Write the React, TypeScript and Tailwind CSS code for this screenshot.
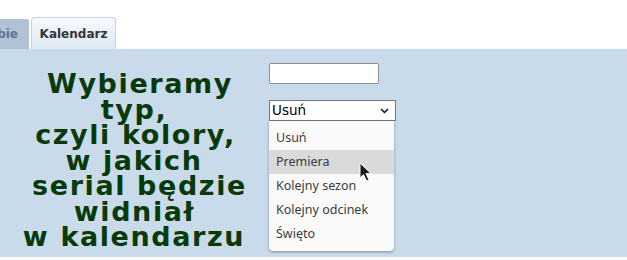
import React from "react";

const lines = [
  { text: "Wybieramy", shift: "pl-[12px]" },
  { text: "typ,", shift: "" },
  { text: "czyli kolory,", shift: "pl-[3px]" },
  { text: "w jakich", shift: "" },
  { text: "serial będzie", shift: "pl-[11px]" },
  { text: "widniał", shift: "pl-[1px]" },
  { text: "w kalendarzu", shift: "" },
];

const options = ["Usuń", "Premiera", "Kolejny sezon", "Kolejny odcinek", "Święto"];

function Cursor() {
  return (
    <svg
      width="14"
      height="21"
      viewBox="0 0 14 21"
      className="absolute left-[359px] top-[162px]"
    >
      <path
        d="M1 1 L1 16 L4.5 12.5 L7.5 19 L10 18 L7 11.5 L12 11.5 Z"
        fill="#1a1a1a"
        stroke="#ffffff"
        strokeWidth="1"
        strokeLinejoin="round"
      />
    </svg>
  );
}

export default function App() {
  return (
    <div className="relative h-[260px] w-[627px] overflow-hidden bg-white font-['DejaVu_Sans',sans-serif]">
      {/* tabs */}
      <div className="flex h-[49px] items-end">
        <div className="flex h-[30px] w-[30px] items-center justify-end overflow-hidden whitespace-nowrap rounded-tr-[3px] border-r border-white bg-[#b2c2d6] pr-[11px] text-[12px] font-bold text-[#5d7393]">
          bie
        </div>
        <div className="ml-[1px] flex h-[32px] w-[85px] items-center justify-center rounded-t-[4px] border border-b-0 border-[#c2d3e4] bg-gradient-to-b from-[#f7fafd] to-[#dce8f3] text-[12px] font-bold text-[#333]">
          Kalendarz
        </div>
      </div>

      {/* content */}
      <div className="flex h-[208px] bg-[#c9dbeb]">
        <div className="w-[268px] pt-[22px]">
          <h1 className="text-center font-['DejaVu_Sans',sans-serif] text-[27px] font-bold leading-[25.5px] tracking-[1.6px] text-[#073a08]">
            {lines.map((l) => (
              <span key={l.text} className={`block ${l.shift}`}>
                {l.text}
              </span>
            ))}
          </h1>
        </div>
        <div className="flex flex-col pl-[1px] pt-[14px]">
          <input
            type="text"
            className="h-[21px] w-[110px] rounded-[2px] border border-[#8f8f8f] bg-white"
          />
          <div className="mt-[16px] flex h-[21px] w-[127px] items-center justify-between border border-[#767676] bg-white pl-[2px] pr-[6px] text-[13.5px] text-black">
            <span>Usuń</span>
            <svg width="9" height="6" viewBox="0 0 9 6">
              <path d="M1 1 L4.5 4.5 L8 1" fill="none" stroke="#111" strokeWidth="1.5" />
            </svg>
          </div>
        </div>
      </div>

      {/* open select popup */}
      <div className="absolute left-[269px] top-[121px] w-[125px] rounded-b-[4px] bg-[#fafafa] py-[5px] shadow-[0_1px_3px_rgba(0,0,0,0.35)] font-['Noto_Sans',sans-serif] text-[12.5px] text-[#3c3c3c]">
        {options.map((o) => (
          <div
            key={o}
            className={`flex h-[24px] items-center pl-[7px] ${o === "Premiera" ? "bg-[#dadada]" : ""}`}
          >
            {o}
          </div>
        ))}
      </div>
      <Cursor />
    </div>
  );
}
